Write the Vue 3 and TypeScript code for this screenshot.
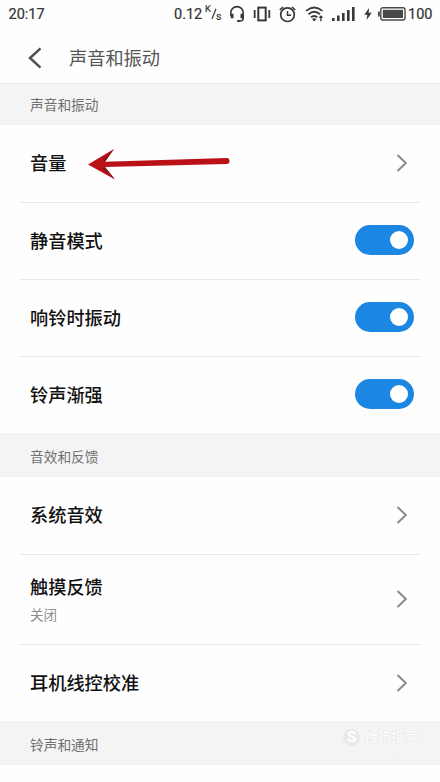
<script setup lang="ts">
import { ref } from 'vue'

interface Item {
  title: string
  kind: 'link' | 'switch'
  note?: string
  on?: boolean
  marked?: boolean
}

interface Group {
  name: string
  items: Item[]
}

const groups = ref<Group[]>([
  {
    name: '声音和振动',
    items: [
      { title: '音量', kind: 'link', marked: true },
      { title: '静音模式', kind: 'switch', on: true },
      { title: '响铃时振动', kind: 'switch', on: true },
      { title: '铃声渐强', kind: 'switch', on: true },
    ],
  },
  {
    name: '音效和反馈',
    items: [
      { title: '系统音效', kind: 'link' },
      { title: '触摸反馈', kind: 'link', note: '关闭' },
      { title: '耳机线控校准', kind: 'link' },
    ],
  },
  { name: '铃声和通知', items: [] },
])
</script>

<template>
  <div class="screen">
    <div class="status">
      <span class="time">20:17</span>
      <span class="speed">0.12</span>
      <span class="unit"><span class="k">K</span><svg class="slash" width="6" height="12" viewBox="0 0 6 12"><path d="M5 .8 1 11" stroke="#383838" stroke-width="1.2" /></svg><span class="s">s</span></span>
      <svg class="headset" width="16" height="18" viewBox="0 0 16 18" fill="none" stroke="#383838">
        <path d="M1.8 11V7.8a6.2 6.2 0 0 1 12.4 0V13q0 3-3 3H9" stroke-width="1.6" />
        <path d="M3.1 8.8v4.4M12.9 8.8v4.4" stroke-width="2.8" />
        <path d="M8.2 16h2.6" stroke-width="2" />
      </svg>
      <svg class="vibrate" width="18" height="16" viewBox="0 0 18 16" fill="none" stroke="#383838">
        <rect x="5.3" y="1.6" width="7.4" height="12.8" stroke-width="2" />
        <path d="M1.7 4v8M16.3 4v8" stroke-width="1.8" />
      </svg>
      <svg class="alarm" width="17" height="17" viewBox="0 0 17 17" fill="none" stroke="#383838">
        <circle cx="8.5" cy="8.7" r="6.8" stroke-width="1.7" />
        <path d="M8.5 5v4.3h3.6" stroke-width="1.5" />
        <path d="M.8 4 4 1M16.2 4 13 1" stroke-width="1.7" />
      </svg>
      <svg class="wifi" width="19" height="16" viewBox="0 0 19 16" fill="none" stroke="#383838">
        <path d="M1 4.9Q9.2-2 17.4 4.9M3.5 8.2q5.7-4.8 11.4 0M6 11.3q3.2-2.7 6.4 0" stroke-width="1.8" />
        <path d="m7 13 2.2 2.5 2.2-2.5q-2.2-1.5-4.4 0Z" fill="#383838" stroke="none" />
        <path d="M15.9 10.3v5M14.4 11.8l1.5-1.6 1.5 1.6" stroke-width="1.3" />
      </svg>
      <svg class="signal" width="23" height="15" viewBox="0 0 23 15" fill="#383838">
        <rect x="0" y="12" width="2.6" height="3" />
        <rect x="5" y="9.5" width="2.6" height="5.5" />
        <rect x="10" y="7" width="2.6" height="8" />
        <rect x="15" y="4" width="2.6" height="11" />
        <rect x="20" y="1" width="2.6" height="14" />
      </svg>
      <svg class="bolt" width="8" height="12" viewBox="0 0 8 12" fill="#383838">
        <path d="M5 0 .3 6.7h3L2.6 12 7.7 4.8h-3Z" />
      </svg>
      <svg class="battery" width="28" height="14" viewBox="0 0 28 14">
        <rect x="2.8" y=".8" width="24.2" height="12.2" rx="2" fill="none" stroke="#484848" stroke-width="1.4" />
        <rect x="4.8" y="2.8" width="20.2" height="8.2" fill="#484848" />
        <rect x="0" y="4.5" width="1.8" height="5" fill="#484848" />
      </svg>
      <span class="percent">100</span>
    </div>

    <header class="header">
      <svg width="14" height="22" viewBox="0 0 14 22" fill="none" stroke="#505050" stroke-width="2.5">
        <path d="M12.5 1.4 2 11l10.5 9.6" />
      </svg>
      <h1>声音和振动</h1>
    </header>

    <section v-for="group in groups" :key="group.name">
      <h2>{{ group.name }}</h2>
      <div v-for="item in group.items" :key="item.title" class="row" :class="{ tall: item.note }">
        <div class="label">
          <span class="title">{{ item.title }}</span>
          <span v-if="item.note" class="note">{{ item.note }}</span>
        </div>
        <svg v-if="item.marked" class="pointer" width="142" height="34" viewBox="0 0 142 34">
          <path d="M0 16.5 26 1 17 13.7 138.5 10a3 3 0 0 1 0 6L17 18.9 27 31.5Z" fill="#bb1018" />
          <path d="M26 1 14 12.2l3 1.5ZM27 31.5 14 21l3-2.1Z" fill="#8a151a" />
        </svg>
        <svg v-if="item.kind === 'link'" class="chevron" width="12" height="18" viewBox="0 0 12 18" fill="none" stroke="#8a8a8a" stroke-width="2">
          <path d="m1.5 1 8.3 8-8.3 8" />
        </svg>
        <button v-else class="switch" :class="{ on: item.on }" @click="item.on = !item.on"><span class="knob" /></button>
      </div>
    </section>

    <div class="watermark">
      <span class="logo">S</span>
      <span class="brand">搜狗指南</span>
      <span class="site">zhinan.sogou.com</span>
    </div>
  </div>
</template>

<style>
body {
  background: #fefefe;
}
</style>

<style scoped>
.screen {
  position: relative;
  width: 440px;
  height: 782px;
  overflow: hidden;
  background: #fefefe;
  font-family: Roboto, 'Noto Sans CJK SC', sans-serif;
}
.status {
  display: flex;
  align-items: center;
  height: 28px;
  padding-left: 8.5px;
  color: #333;
  font-size: 14.5px;
  -webkit-text-stroke: 0.2px #333;
}
.time {
  width: 165.5px;
}
.speed {
  width: 31px;
}
.unit {
  display: flex;
  align-items: center;
  width: 24px;
  height: 18px;
  font-size: 10px;
  line-height: 12px;
}
.k {
  align-self: flex-start;
  margin-top: -2px;
  font-size: 9.5px;
}
.s {
  align-self: flex-end;
  margin-left: -1px;
  font-size: 10.5px;
}
.headset {
  margin-right: 8px;
}
.vibrate {
  margin-right: 8px;
}
.alarm {
  margin-right: 9px;
}
.wifi {
  margin-right: 8px;
}
.signal {
  margin: -2px 9px 0 0;
}
.bolt {
  margin-right: 6px;
}
.battery {
  margin-right: 2px;
}
.header {
  display: flex;
  align-items: center;
  height: 55px;
  padding: 4px 0 0 28px;
  box-sizing: border-box;
}
h1 {
  margin: 1px 0 0 27px;
  color: #555;
  font-size: 18.2px;
  font-weight: 400;
  line-height: 27px;
}
h2 {
  box-sizing: border-box;
  height: 44px;
  margin: 0;
  padding: 2px 0 0 30px;
  background: #f4f4f4;
  color: #707070;
  font-size: 13.7px;
  font-weight: 400;
  line-height: 44px;
}
section:first-of-type h2 {
  height: 42px;
  padding-top: 1px;
  border-top: 1px solid #e9e9e9;
  line-height: 40px;
}
.row {
  display: flex;
  align-items: center;
  box-sizing: border-box;
  height: 77px;
  margin: 0 20px;
  padding: 0 6.5px 0 10px;
  border-bottom: 1px solid #e8e8e8;
}
.row:nth-child(2) {
  height: 78px;
}
.row.tall {
  height: 90px;
}
.row:last-child {
  height: 76px;
  border-bottom: 0;
}
.label {
  display: flex;
  flex-direction: column;
}
.title {
  color: #111;
  font-size: 18.2px;
  font-weight: 500;
  line-height: 27px;
}
.note {
  margin-top: 4px;
  color: #8c8c8c;
  font-size: 13.5px;
  line-height: 20px;
}
.pointer {
  margin: 2px 0 0 22px;
}
.chevron {
  margin: -1px 5.5px 0 auto;
}
.switch {
  display: flex;
  align-items: center;
  width: 59px;
  height: 30px;
  margin: -2px 0 0 auto;
  padding: 0 5.5px;
  border: 0;
  border-radius: 15px;
  background: #c8c8c8;
}
.switch.on {
  justify-content: flex-end;
  background: #1c86e3;
}
.knob {
  width: 18px;
  height: 18px;
  border-radius: 50%;
  background: #fff;
}
.watermark {
  position: absolute;
  top: 727px;
  left: 343px;
  display: grid;
  grid-template-columns: 17px auto;
  column-gap: 5px;
  align-items: center;
  color: #fff;
}
.logo {
  width: 17px;
  height: 17px;
  border-radius: 50%;
  background: #e9e9e9;
  font-size: 15px;
  font-weight: 700;
  line-height: 17px;
  text-align: center;
}
.brand {
  font-size: 13px;
  font-weight: 500;
  line-height: 20px;
  text-shadow: 0 0 1px #ccc;
}
.site {
  grid-column: 1 / 3;
  font-size: 9px;
  line-height: 14px;
  text-shadow: 0 0 1px #ddd;
}
</style>
